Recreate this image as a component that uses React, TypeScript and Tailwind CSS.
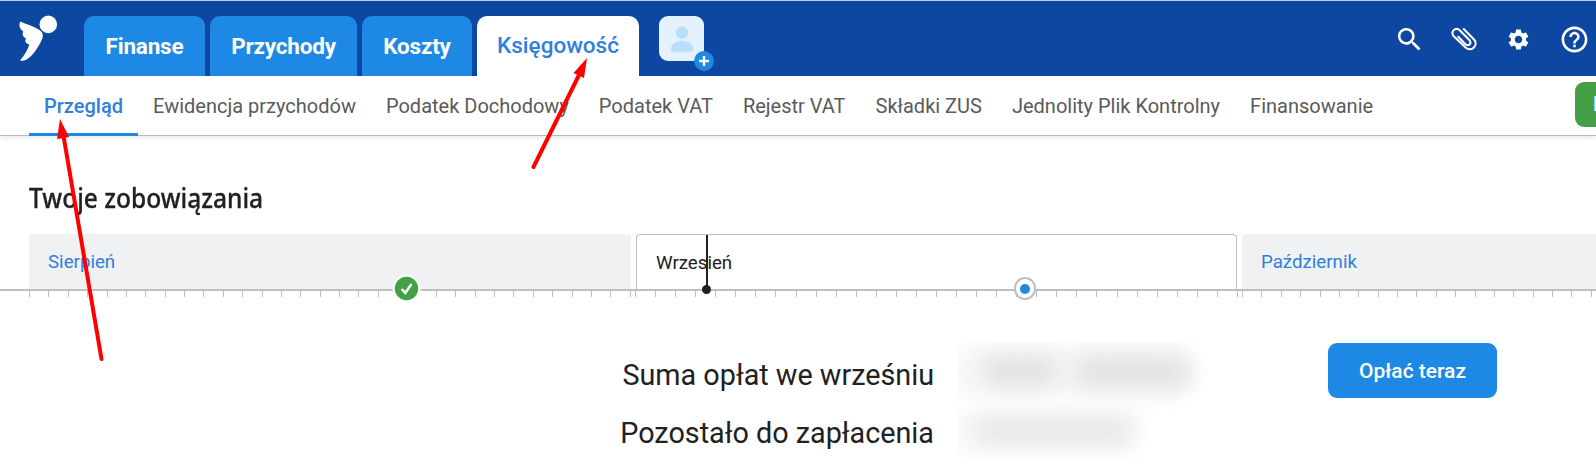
import { MdSearch, MdSettings, MdHelpOutline } from "react-icons/md";

const tabs = [
  { label: "Finanse", size: "w-[121px]" },
  { label: "Przychody", size: "w-[147px]" },
  { label: "Koszty", size: "w-[110px]" },
];

const sections = [
  "Ewidencja przychodów",
  "Podatek Dochodowy",
  "Podatek VAT",
  "Rejestr VAT",
  "Składki ZUS",
  "Jednolity Plik Kontrolny",
  "Finansowanie",
];

function Logo() {
  return (
    <svg width="40" height="48" viewBox="0 0 40 48" fill="#fff">
      <circle cx="30.3" cy="9.4" r="8.8" />
      <path d="M2.3 6.6 C8 9.2 16 11.500 21.500 15 C26 18 25.500 22 22.500 27.500 C17.500 37 10.500 46.300 3 46 L2.300 45 C6.500 40 10 34.500 11.300 29.500 C7.500 28.500 6.500 26 8 23.500 C4.500 21.500 4 19 5.300 16.500 C1.500 14 0.500 10 2.300 6.600 Z" />
    </svg>
  );
}

function Paperclip() {
  return (
    <svg width="26" height="26" viewBox="0 0 26 26" fill="none" stroke="#fff" strokeWidth="2" strokeLinecap="round">
      <path d="M12.800 2 L23 12.500 C28 18 20.500 25.500 14.500 20.500 L2.800 9.300 C-1 4.500 4.500 -0.500 9 3.500 L18.500 13.200 C21 16.800 17.500 20 14.200 17 L7.300 9.800" />
    </svg>
  );
}

function Ticks({ days }: { days: number }) {
  return (
    <div className="flex h-[6px] w-full justify-between">
      {Array.from({ length: days + 1 }, (_, i) => (
        <i key={i} className="h-full w-px bg-[#bdbfc3]" />
      ))}
    </div>
  );
}

export default function App() {
  return (
    <div className="relative h-[474px] w-[1596px] overflow-hidden bg-white font-['Roboto',sans-serif] text-[#212121]">
      <header className="flex h-[76px] items-start border-t border-[#b5d3f5] bg-[#0d47a1]">
        <div className="ml-[18px] mt-[14px] w-[66px]">
          <Logo />
        </div>
        <nav className="mt-[15px] flex gap-[5px] text-[22.500px]">
          {tabs.map((t) => (
            <div key={t.label} className={`flex h-[60px] justify-center rounded-t-[10px] bg-[#1e88e5] pt-[13px] font-bold leading-[34px] tracking-[-0.2px] text-white ${t.size}`}>
              {t.label}
            </div>
          ))}
          <div className="flex h-[60px] w-[162px] justify-center rounded-t-[10px] bg-white pt-[12px] font-medium leading-[34px] text-[#2f80dc]">Księgowość</div>
        </nav>
        <div className="relative ml-5 mt-[15px] h-[45px] w-[45px] rounded-[9px] bg-[#e3f2fd]">
          <svg width="45" height="45" viewBox="0 0 45 45" fill="#bbdefb">
            <circle cx="23" cy="16.800" r="6.200" />
            <path d="M12 33 C12 22 34.200 22 34.200 33 Q34.200 35.800 31.500 35.800 H14.500 Q12 35.800 12 33 Z" />
          </svg>
          <svg className="absolute left-[35px] top-[35px]" width="20" height="20" viewBox="0 0 20 20">
            <circle cx="10" cy="10" r="10" fill="#1e88e5" />
            <path d="M10 5v10M5 10h10" stroke="#fff" strokeWidth="2.400" />
          </svg>
        </div>
        <div className="ml-auto flex h-[77px] items-center pr-[6px] text-white">
          <MdSearch className="mr-[26px] size-[31px]" />
          <div className="mr-[29px] pt-px"><Paperclip /></div>
          <MdSettings className="mr-[28px] size-[25px]" />
          <MdHelpOutline className="size-[31px]" />
        </div>
      </header>

      <div className="flex h-[60px] border-b border-[#b9b9bb] pl-[29px] text-[20px] leading-[24px] text-[#5a5a5a] shadow-[0_2px_5px_rgba(0,0,0,0.09)]">
        <div className="h-[60px] w-[109px] border-b-[3px] border-[#1e88e5] pt-[18px] text-center font-medium text-[#2f80dc]">Przegląd</div>
        {sections.map((s) => (
          <div key={s} className="px-[15px] pt-[18px] whitespace-nowrap">{s}</div>
        ))}
        <div className="ml-auto mt-[6px] h-[45px] w-[21px] overflow-hidden rounded-l-[9px] bg-[#43a047] pl-[18px] font-medium leading-[45px] text-white">D</div>
      </div>

      <main>
        <h1 className="h-[98px] pl-[29px] pt-[44px] font-['Noto_Sans',sans-serif] text-[27px] font-medium leading-[36px]">
          <span className="inline-block origin-left scale-x-[0.910] whitespace-nowrap [-webkit-text-stroke:0.3px_#212121]">Twoje zobowiązania</span>
        </h1>
        <div className="relative">
          <div className="flex h-[55px] gap-[5px] pl-[29px] text-[18.700px] leading-[22px]">
            <div className="w-[602px] shrink-0 rounded-t-[3px] bg-[#f0f1f3] pl-[19px] pt-[17px] text-[#2f80dc]">Sierpień</div>
            <div className="w-[601px] shrink-0 rounded-t-[4px] border border-b-0 border-[#bdbfc3] pl-[19px] pt-[17px]">Wrzesień</div>
            <div className="w-[602px] shrink-0 rounded-t-[3px] bg-[#f0f1f3] pl-[19px] pt-[17px] text-[#2f80dc]">Październik</div>
          </div>
          <div className="h-[2px] bg-[#bdbfc3]" />
          <div className="flex gap-[4px] pl-[29px]">
            <div className="w-[602px] shrink-0"><Ticks days={31} /></div>
            <div className="w-[603px] shrink-0"><Ticks days={30} /></div>
            <div className="w-[602px] shrink-0"><Ticks days={31} /></div>
          </div>
          <svg className="absolute left-[392px] top-[40px]" width="29" height="29" viewBox="0 0 29 29">
            <circle cx="14.500" cy="14.500" r="14" fill="#fff" />
            <circle cx="14.500" cy="14.500" r="11.700" fill="#43a047" />
            <path d="M9.800 15l3.500 4 6.200-9" fill="none" stroke="#fff" strokeWidth="2.500" />
          </svg>
          <i className="absolute left-[706px] top-px h-[54px] w-[2px] bg-[#212121]" />
          <i className="absolute left-[702px] top-[51px] size-[9px] rounded-full bg-[#212121]" />
          <div className="absolute left-[1014px] top-[43px] flex h-[23px] w-[22px] items-center justify-center rounded-full border-2 border-[#bdbfc3] bg-white">
            <i className="size-[10px] rounded-full bg-[#1e88e5]" />
          </div>
        </div>

        <div className="flex items-start pt-[45px]">
          <div className="w-[934px] pt-[16px] text-right text-[28.750px] leading-[34px]">
            <div>Suma opłat we wrześniu</div>
            <div className="pt-[24px]">Pozostało do zapłacenia</div>
          </div>
          <div className="relative ml-[24px] h-[118px] w-[260px] overflow-hidden">
            <i className="absolute left-[-6px] top-[4px] h-[50px] w-[242px] rounded-[20px] bg-[#f6f6f6] blur-[9px]" />
            <i className="absolute left-[24px] top-[14px] h-[30px] w-[76px] rounded-full bg-[#e3e3e3] blur-[10px]" />
            <i className="absolute left-[116px] top-[14px] h-[32px] w-[116px] rounded-full bg-[#e3e3e3] blur-[10px]" />
            <i className="absolute left-[-6px] top-[67px] h-[44px] w-[190px] rounded-[20px] bg-[#f7f7f7] blur-[9px]" />
            <i className="absolute left-[18px] top-[76px] h-[26px] w-[154px] rounded-full bg-[#e8e8e8] blur-[10px]" />
          </div>
          <button className="ml-[110px] mt-px h-[55px] w-[169px] rounded-[9px] bg-[#1e88e5] pt-[2px] text-[21px] font-medium text-white">Opłać teraz</button>
        </div>
      </main>

      <svg className="pointer-events-none absolute inset-0" width="1596" height="474" viewBox="0 0 1596 474" fill="#f00" stroke="#f00">
        <path d="M101.500 359 L63.500 136 M533.500 167 L580 73" strokeWidth="4" strokeLinecap="round" />
        <path d="M60 119 L57 139 L69 137 Z M587 58 L573.500 73 L584 78 Z" stroke="none" />
      </svg>
    </div>
  );
}
